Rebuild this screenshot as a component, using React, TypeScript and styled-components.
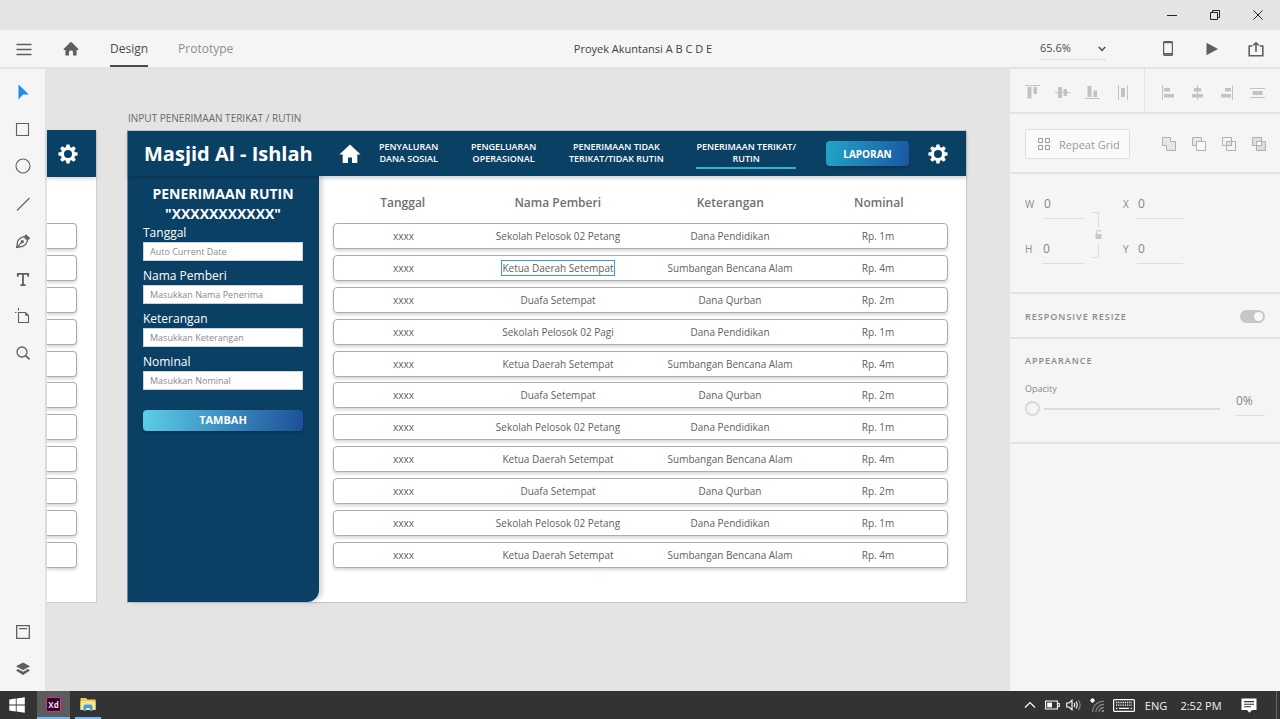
import React from "react";
import styled, { createGlobalStyle } from "styled-components";

const GlobalStyle = createGlobalStyle`
  *, *::before, *::after { box-sizing: border-box; }
  body {
    margin: 0;
    background: #e4e4e4;
    color: #4b4b4b;
    font-family: "Open Sans", "Noto Sans", sans-serif;
    font-size: 12px;
  }
  button, input, select { font: inherit; color: inherit; }
  svg { display: block; flex: none; }
`;

const NAVY = "#0b4065";
const LINE = "#e3e3e3";
const PANEL = "#f5f5f5";

/* ---------- window ---------- */

const Window = styled.div`
  display: flex;
  flex-direction: column;
  min-height: 100vh;
`;

const TitleBar = styled.div`
  display: flex;
  justify-content: flex-end;
  height: 30px;
  padding-right: 1px;
  background: #e4e4e4;
`;

const WindowButton = styled.button`
  display: flex;
  align-items: center;
  justify-content: center;
  width: 43px;
  padding: 0;
  border: 0;
  background: none;
  color: #222;
`;

const IconButton = styled.button<{ $w?: number; $h?: number; $color?: string }>`
  display: flex;
  align-items: center;
  justify-content: center;
  width: ${(p) => p.$w ?? 16}px;
  height: ${(p) => p.$h ?? 30}px;
  padding: 0;
  border: 0;
  background: none;
  color: ${(p) => p.$color ?? "#5f5f5f"};
`;

const AppBar = styled.header`
  display: grid;
  grid-template-columns: 1fr auto 1fr;
  height: 39px;
  padding: 0 10px 0 16px;
  background: ${PANEL};
  border-bottom: 2px solid ${LINE};
`;

const AppBarLeft = styled.div`
  display: flex;
  align-items: center;
  gap: 31px;
`;

const Modes = styled.nav`
  display: flex;
  align-self: stretch;
  gap: 30px;
`;

const Mode = styled.button<{ $on?: boolean }>`
  padding: 2px 0 0;
  border: 0;
  border-bottom: 2px solid ${(p) => (p.$on ? "#4b4b4b" : "transparent")};
  background: none;
  color: ${(p) => (p.$on ? "#4b4b4b" : "#8e8e8e")};
  font-size: 12px;
`;

const DocumentName = styled.h1`
  align-self: center;
  margin: 0;
  font-size: 11px;
  font-weight: 400;
  color: #3e3e3e;
`;

const AppBarRight = styled.div`
  display: flex;
  align-items: center;
  justify-content: flex-end;
  gap: 28px;
  padding-right: 6px;
`;

const ZoomField = styled.label`
  display: flex;
  position: relative;
  width: 66px;
  height: 22px;
  margin-right: 26px;
  border-bottom: 1px solid #dcdcdc;

  svg {
    position: absolute;
    right: 0;
    top: 7px;
    pointer-events: none;
  }
`;

const ZoomSelect = styled.select`
  appearance: none;
  width: 100%;
  padding: 0 0 2px;
  border: 0;
  background: none;
  font-size: 11px;
`;

const Workspace = styled.div`
  display: flex;
  flex: 1;
`;

const Tools = styled.aside`
  display: flex;
  flex-direction: column;
  justify-content: space-between;
  width: 47px;
  padding: 4px 0;
  background: ${PANEL};
  border-right: 2px solid ${LINE};
`;

const ToolGroup = styled.div<{ $h?: number }>`
  display: flex;
  flex-direction: column;
  justify-content: space-between;
  height: ${(p) => (p.$h ? `${p.$h}px` : "auto")};
`;

/* ---------- canvas ---------- */

const Canvas = styled.main`
  display: flex;
  flex: 1;
  align-items: flex-start;
  gap: 30px;
  min-width: 0;
  padding: 41px 43px 40px 0;
`;

const PreviousBoard = styled.section`
  width: 50px;
  height: 473px;
  margin-top: 20px;
  border-right: 1px solid #d0d0d0;
  border-bottom: 1px solid #d0d0d0;
  background: #fff;
`;

const PreviousHead = styled.div`
  display: flex;
  align-items: center;
  height: 47px;
  padding-left: 11px;
  background: ${NAVY};
  box-shadow: 0 2px 4px rgba(0, 0, 0, 0.16);
`;

const PreviousRows = styled.div`
  display: flex;
  flex-direction: column;
  justify-content: space-between;
  height: 345px;
  margin: 46px 19px 0 0;
`;

const PreviousRow = styled.div`
  height: 26px;
  border: 1px solid #adadad;
  border-left: 0;
  border-radius: 0 4px 4px 0;
  box-shadow: 0 2px 3px rgba(0, 0, 0, 0.16);
`;

const BoardColumn = styled.div`
  flex: 1;
  min-width: 0;
`;

const BoardLabel = styled.div`
  height: 20px;
  padding-left: 1px;
  font-size: 10px;
  line-height: 16px;
  color: #6a6a6a;
`;

const Board = styled.section`
  height: 473px;
  border: 1px solid #c4c8cc;
  border-left-color: #6f8a9e;
  background: #fff;
`;

const BoardHead = styled.header`
  position: relative;
  display: flex;
  align-items: center;
  height: 45px;
  padding: 0 18px 0 16px;
  background: ${NAVY};
  box-shadow: 0 2px 4px rgba(0, 0, 0, 0.2);
  color: #fff;
`;

const Brand = styled.h2`
  width: 195px;
  margin: 0;
  font-size: 20px;
  font-weight: 700;
  line-height: 28px;
  white-space: nowrap;
`;

const BoardNav = styled.nav`
  display: flex;
  flex: 1;
  align-items: flex-start;
  justify-content: space-between;
  margin: 0 30px 0 18px;
  padding-top: 2px;
`;

const BoardLink = styled.a<{ $on?: boolean }>`
  padding-bottom: 2px;
  border-bottom: 2px solid ${(p) => (p.$on ? "#29b4cf" : "transparent")};
  color: #fff;
  font-size: 9px;
  font-weight: 600;
  line-height: 12px;
  text-align: center;
  text-decoration: none;
  white-space: nowrap;
`;

const ReportButton = styled.button`
  width: 83px;
  height: 25px;
  margin-right: 19px;
  padding: 0;
  border: 0;
  border-radius: 4px;
  background: linear-gradient(100deg, #22a5c6, #1b57a2);
  box-shadow: 0 2px 3px rgba(0, 0, 0, 0.2);
  color: #fff;
  font-size: 10px;
  font-weight: 700;
`;

const BoardBody = styled.div`
  display: flex;
  height: 426px;
`;

const FormPanel = styled.form`
  width: 191px;
  padding: 8px 16px 0 15px;
  border-bottom-right-radius: 12px;
  background: ${NAVY};
  box-shadow: 3px 0 5px rgba(0, 0, 0, 0.18);
  color: #fff;
`;

const FormTitle = styled.h3`
  margin: 0 -8px;
  font-size: 14px;
  font-weight: 700;
  line-height: 20px;
  text-align: center;
`;

const Field = styled.label`
  display: block;
  height: 43px;
  font-size: 12px;
  line-height: 18px;
`;

const FieldInput = styled.input`
  display: block;
  width: 100%;
  height: 19px;
  padding: 0 6px;
  border: 1px solid #c9d3da;
  border-radius: 0;
  background: #fff;
  color: #555;
  font-size: 9px;

  &::placeholder { color: #8a8a8a; opacity: 1; }
`;

const AddButton = styled.button`
  width: 100%;
  height: 21px;
  margin-top: 14px;
  padding: 0 0 2px;
  border: 0;
  border-radius: 4px;
  background: linear-gradient(100deg, #5ccfe8, #1c4f98);
  box-shadow: 0 2px 3px rgba(0, 0, 0, 0.2);
  color: #fff;
  font-size: 11px;
  font-weight: 700;
  line-height: 18px;
`;

const Records = styled.table`
  display: block;
  flex: 1;
  padding: 17px 18px 0 14px;
`;

const RecordsHead = styled.thead`
  display: block;
  margin-bottom: 10px;
`;

const RecordsBody = styled.tbody`
  display: flex;
  flex-direction: column;
  justify-content: space-between;
  height: 345px;
`;

const Row = styled.tr<{ $card?: boolean }>`
  display: grid;
  grid-template-columns: 139fr 170fr 174fr 122fr;
  align-items: center;
  height: ${(p) => (p.$card ? 26 : 20)}px;
  padding-right: 8px;
  border: ${(p) => (p.$card ? "1px solid #adadad" : "0")};
  border-radius: 4px;
  box-shadow: ${(p) => (p.$card ? "0 2px 3px rgba(0, 0, 0, 0.16)" : "none")};
`;

const HeadCell = styled.th`
  padding: 0;
  color: #707070;
  font-size: 12px;
  font-weight: 600;
  line-height: 18px;
`;

const Cell = styled.td`
  padding: 0;
  color: #606060;
  font-size: 10px;
  line-height: 14px;
  text-align: center;
`;

const Selected = styled.span`
  display: inline-block;
  outline: 1px solid #3d9ad8;
`;

/* ---------- inspector ---------- */

const Inspector = styled.aside`
  width: 270px;
  background: ${PANEL};
  color: #8a8a8a;
`;

const AlignBar = styled.div`
  display: flex;
  height: 45px;
  border-bottom: 2px solid ${LINE};
`;

const AlignGroup = styled.div<{ $first?: boolean }>`
  display: flex;
  align-items: center;
  width: ${(p) => (p.$first ? "135px" : "auto")};
  padding: 3px 0 0 7px;
  border-right: ${(p) => (p.$first ? `1px solid ${LINE}` : "0")};
`;

const GridBar = styled.div`
  display: flex;
  align-items: center;
  height: 60px;
  padding: 2px 0 0 15px;
  border-bottom: 2px solid ${LINE};
`;

const RepeatButton = styled.button`
  display: flex;
  align-items: center;
  gap: 8px;
  width: 105px;
  height: 30px;
  margin-right: 24px;
  padding: 0 0 0 11px;
  border: 1px solid #dfdfdf;
  border-radius: 3px;
  background: #fafafa;
  color: #9a9a9a;
  font-size: 11px;
  white-space: nowrap;
`;

const SizeBlock = styled.div`
  display: flex;
  height: 120px;
  padding: 15px 0 0 15px;
  border-bottom: 2px solid ${LINE};
`;

const SizeColumn = styled.div`
  display: flex;
  flex-direction: column;
  gap: 15px;
`;

const SizeField = styled.label<{ $w: number }>`
  display: flex;
  align-items: center;
  justify-content: space-between;
  width: ${(p) => p.$w}px;
  height: 30px;
  font-size: 10px;
`;

const NumberInput = styled.input<{ $w: number }>`
  width: ${(p) => p.$w}px;
  height: 30px;
  padding: 0 1px;
  border: 0;
  border-bottom: 1px solid #dedede;
  background: none;
  color: #858585;
  font-size: 12px;
`;

const LockLink = styled.div`
  display: flex;
  align-items: center;
  width: 38px;
  height: 92px;
  padding-left: 7px;
`;

const ResizeBar = styled.label`
  display: flex;
  align-items: center;
  justify-content: space-between;
  height: 45px;
  padding: 2px 15px 0;
  border-bottom: 2px solid ${LINE};
  font-size: 9px;
  font-weight: 600;
  letter-spacing: 1px;
`;

const Toggle = styled.input`
  appearance: none;
  display: flex;
  align-items: center;
  justify-content: flex-end;
  width: 25px;
  height: 13px;
  margin: 0;
  padding: 2px;
  border-radius: 7px;
  background: #c6c6c6;

  &::before {
    content: "";
    width: 9px;
    height: 9px;
    border-radius: 5px;
    background: #f8f8f8;
  }
`;

const Appearance = styled.section`
  height: 105px;
  padding: 14px 15px 0;
  border-bottom: 2px solid ${LINE};
`;

const AppearanceTitle = styled.h3`
  margin: 0;
  font-size: 9px;
  font-weight: 600;
  letter-spacing: 1px;
  line-height: 16px;
`;

const OpacityRow = styled.div`
  display: flex;
  align-items: flex-end;
  justify-content: space-between;
  margin-top: 12px;
`;

const OpacityLabel = styled.label`
  width: 195px;
  font-size: 9px;
  line-height: 16px;
`;

const Slider = styled.input`
  appearance: none;
  display: block;
  width: 100%;
  height: 15px;
  margin: 4px 0 0;
  background: linear-gradient(#dcdcdc, #dcdcdc) 19px 50% / 100% 2px no-repeat;

  &::-webkit-slider-thumb {
    appearance: none;
    width: 15px;
    height: 15px;
    border: 2px solid #d8d8d8;
    border-radius: 50%;
    background: ${PANEL};
  }
`;

/* ---------- taskbar ---------- */

const Taskbar = styled.footer`
  display: flex;
  justify-content: space-between;
  height: 28px;
  background: #333;
  color: #f2f2f2;
`;

const TaskGroup = styled.div`
  display: flex;
  align-items: stretch;
`;

const TaskButton = styled.button<{ $w: number; $active?: boolean; $open?: boolean }>`
  display: flex;
  align-items: center;
  justify-content: center;
  width: ${(p) => p.$w}px;
  margin-right: ${(p) => (p.$active ? 5 : 0)}px;
  padding: 0;
  border: 0;
  border-bottom: ${(p) => (p.$open ? "2px solid #76b9ed" : "0")};
  background: ${(p) => (p.$active ? "#5c5c5c" : "none")};
  color: #fff;
`;

const StartButton = styled(TaskButton)`
  padding-right: 3px;
`;

const XdBadge = styled.span`
  display: flex;
  align-items: center;
  justify-content: center;
  width: 15px;
  height: 15px;
  border: 1px solid #d0309c;
  border-radius: 2px;
  background: #2e001e;
  color: #ffd9f2;
  font-size: 8px;
  font-weight: 700;
`;

const Tray = styled.div`
  display: flex;
  align-items: center;
  padding-right: 3px;
`;

const TrayText = styled.span<{ $w: number }>`
  width: ${(p) => p.$w}px;
  font-size: 11px;
  text-align: center;
  white-space: nowrap;
`;

const ShowDesktop = styled.button`
  align-self: stretch;
  width: 1px;
  margin-left: 7px;
  padding: 0;
  border: 0;
  background: #666;
`;

/* ---------- icons ---------- */

const GearIcon = () => (
  <svg width="20" height="20" viewBox="0 0 20 20" fill="none" stroke="#fff">
    <circle cx="10" cy="10" r="5.6" strokeWidth="3.2" />
    {[0, 45, 90, 135, 180, 225, 270, 315].map((a) => (
      <path key={a} d="M7.9 3.6 L8.5 .4 H11.5 L12.1 3.6 Z" fill="#fff" stroke="none" transform={`rotate(${a} 10 10)`} />
    ))}
  </svg>
);

const HouseIcon = ({ size, color }: { size: number; color: string }) => (
  <svg width={size} height={size} viewBox="0 0 22 20" fill={color}>
    <path d="M11 .6 L21.6 10.4 H18.3 V19 H13 V13.4 H9 V19 H3.7 V10.4 H.4 Z" />
  </svg>
);

const HomeIcon = () => (
  <svg width="16" height="16" viewBox="0 0 16 16" fill="currentColor">
    <path d="M7.3 1.3 Q8 .7 8.7 1.3 L15.4 8.1 Q15.8 8.9 15 9 H13.6 V14 Q13.6 14.6 13 14.6 H10 V11 Q10 9.6 8 9.6 Q6 9.6 6 11 V14.6 H3 Q2.4 14.6 2.4 14 V9 H1 Q.2 8.9 .6 8.1 Z" />
  </svg>
);

const Line = ({ d, size = 16, width = 1 }: { d: string; size?: number; width?: number }) => (
  <svg width={size} height={size} viewBox={`0 0 ${size} ${size}`} fill="none" stroke="currentColor" strokeWidth={width}>
    <path d={d} />
  </svg>
);

const Solid = ({ children, size = 15 }: { children: React.ReactNode; size?: number }) => (
  <svg width={size} height={size} viewBox={`0 0 ${size} ${size}`} fill="#c3c3c3">
    {children}
  </svg>
);

const tools: { name: string; icon: React.ReactNode }[] = [
  {
    name: "Select",
    icon: (
      <svg width="16" height="16" viewBox="0 0 16 16">
        <path d="M3.5 .5 L13.8 10.6 H8 L3.5 15.5 Z" fill="#1b8eea" />
      </svg>
    ),
  },
  { name: "Rectangle", icon: <Line d="M1.5 2.5 H13.5 V14.5 H1.5 Z" width={1.1} /> },
  {
    name: "Ellipse",
    icon: (
      <svg width="16" height="16" viewBox="0 0 16 16" fill="none" stroke="currentColor" strokeWidth="1.1">
        <circle cx="8" cy="8" r="7" />
      </svg>
    ),
  },
  { name: "Line", icon: <Line d="M2 14.5 L14.5 2" width={1.1} /> },
  {
    name: "Pen",
    icon: (
      <svg width="16" height="16" viewBox="0 0 16 16" fill="none" stroke="currentColor" strokeWidth="1.2">
        <path d="M1.7 14.4 L2.6 8.4 Q4 5 8.8 3.6 L12.5 7.4 Q11.4 12 7.6 13.4 Z M1.8 14.3 L6.6 9.4" />
        <circle cx="7.3" cy="8.7" r="1" fill="currentColor" />
        <path d="M9 3.3 L11 1.2 L15.2 5.2 L13 7.3 Z" fill="currentColor" stroke="none" />
      </svg>
    ),
  },
  { name: "Text", icon: <Line d="M2.8 5.8 V2.9 H13.2 V5.8 M8 2.9 V14.4 M5.4 14.2 H10.6" width={1.8} /> },
  {
    name: "Artboard",
    icon: (
      <svg width="16" height="16" viewBox="0 0 16 16" fill="none" stroke="currentColor" strokeWidth="1.1">
        <path d="M3.5 4.5 H10.5 L13.5 7.5 V14.5 H3.5 Z M3.5 0 V2.5 M-1 4.5 H1.5" />
        <path d="M10.3 4.3 L13.8 7.8 H10.3 Z" fill="currentColor" stroke="none" />
      </svg>
    ),
  },
  {
    name: "Zoom",
    icon: (
      <svg width="16" height="16" viewBox="0 0 16 16" fill="none" stroke="currentColor" strokeWidth="1.3">
        <circle cx="7" cy="7" r="5" />
        <path d="M10.6 10.6 L14.6 14.4" strokeWidth="1.7" />
      </svg>
    ),
  },
];

const rowAlign = [
  { name: "Align top", icon: <Solid><path d="M0 0 H15 V1 H0 Z M2.5 2 H6.5 V13.5 H2.5 Z M8.5 2 H12 V9 H8.5 Z" /></Solid> },
  { name: "Align middle", icon: <Solid><path d="M0 7 H15 V8 H0 Z M3 2 H7 V13 H3 Z M8.5 4 H12 V11 H8.5 Z" /></Solid> },
  { name: "Align bottom", icon: <Solid><path d="M0 13 H15 V14 H0 Z M2.5 1 H6.5 V12 H2.5 Z M8.5 5.5 H12 V12 H8.5 Z" /></Solid> },
  { name: "Distribute across", icon: <Solid><path d="M3 0 H4 V15 H3 Z M12 0 H13 V15 H12 Z M6 3 H10 V12 H6 Z" /></Solid> },
];

const columnAlign = [
  { name: "Align left", icon: <Solid><path d="M2 0 H3 V15 H2 Z M4 3 H10 V6.5 H4 Z M4 9 H14 V12.5 H4 Z" /></Solid> },
  { name: "Align center", icon: <Solid><path d="M7 0 H8 V15 H7 Z M4 3 H11 V6.5 H4 Z M2 9 H13 V12.5 H2 Z" /></Solid> },
  { name: "Align right", icon: <Solid><path d="M12 0 H13 V15 H12 Z M5 3 H11 V6.5 H5 Z M1 9 H11 V12.5 H1 Z" /></Solid> },
  { name: "Distribute down", icon: <Solid><path d="M0 3 H15 V4 H0 Z M0 12 H15 V13 H0 Z M2.5 6 H12.5 V10 H2.5 Z" /></Solid> },
];

type Shape = "add" | "subtract" | "intersect" | "exclude";

const ShapeIcon = ({ kind }: { kind: Shape }) => (
  <svg width="14" height="14" viewBox="0 0 14 14" fill="none" stroke="#b0b0b0">
    {kind === "add" && <path d="M.5 .5 H8.5 V4.5 H13.5 V13.5 H4.5 V8.5 H.5 Z" fill="#e6e6e6" />}
    {kind === "subtract" && (
      <>
        <path d="M.5 .5 H9.5 V4.5 H4.5 V8.5 H.5 Z" fill="#e6e6e6" />
        <path d="M4.5 4.5 H13.5 V13.5 H4.5 Z" fill="#fafafa" />
      </>
    )}
    {kind === "intersect" && (
      <>
        <path d="M.5 .5 H9.5 V8.5 H.5 Z M4.5 4.5 H13.5 V13.5 H4.5 Z" />
        <path d="M4.5 4.5 H9.5 V8.5 H4.5 Z" fill="#e2e2e2" />
      </>
    )}
    {kind === "exclude" && (
      <>
        <path d="M.5 .5 H9.5 V8.5 H.5 Z M4.5 4.5 H13.5 V13.5 H4.5 Z" fill="#dedede" />
        <path d="M4.5 4.5 H9.5 V8.5 H4.5 Z" fill="#fafafa" />
      </>
    )}
  </svg>
);

const shapes: Shape[] = ["add", "subtract", "intersect", "exclude"];

/* ---------- data ---------- */

const links = [
  ["PENYALURAN", "DANA SOSIAL"],
  ["PENGELUARAN", "OPERASIONAL"],
  ["PENERIMAAN TIDAK", "TERIKAT/TIDAK RUTIN"],
  ["PENERIMAAN TERIKAT/", "RUTIN"],
];

const fields = [
  ["Tanggal", "Auto Current Date"],
  ["Nama Pemberi", "Masukkan Nama Penerima"],
  ["Keterangan", "Masukkan Keterangan"],
  ["Nominal", "Masukkan Nominal"],
];

const petang = ["xxxx", "Sekolah Pelosok 02 Petang", "Dana Pendidikan", "Rp. 1m"];
const pagi = ["xxxx", "Sekolah Pelosok 02 Pagi", "Dana Pendidikan", "Rp. 1m"];
const ketua = ["xxxx", "Ketua Daerah Setempat", "Sumbangan Bencana Alam", "Rp. 4m"];
const duafa = ["xxxx", "Duafa Setempat", "Dana Qurban", "Rp. 2m"];
const records = [petang, ketua, duafa, pagi, ketua, duafa, petang, ketua, duafa, petang, ketua];

export default function App() {
  return (
    <Window>
      <GlobalStyle />
      <TitleBar>
        <WindowButton aria-label="Minimize"><Line size={10} d="M0 5.5 H10" /></WindowButton>
        <WindowButton aria-label="Restore"><Line size={10} d="M.5 2.5 H7.5 V9.5 H.5 Z M2.5 2.5 V.5 H9.5 V7.5 H7.5" /></WindowButton>
        <WindowButton aria-label="Close"><Line size={10} d="M.5 .5 L9.5 9.5 M9.5 .5 L.5 9.5" /></WindowButton>
      </TitleBar>

      <AppBar>
        <AppBarLeft>
          <IconButton aria-label="Menu"><Line d="M.5 3.5 H15.5 M.5 8.5 H15.5 M.5 13.5 H15.5" width={1.6} /></IconButton>
          <IconButton aria-label="Home"><HomeIcon /></IconButton>
          <Modes>
            <Mode $on>Design</Mode>
            <Mode>Prototype</Mode>
          </Modes>
        </AppBarLeft>
        <DocumentName>Proyek Akuntansi A B C D E</DocumentName>
        <AppBarRight>
          <ZoomField>
            <ZoomSelect aria-label="Zoom level" defaultValue="65.6%">
              <option>65.6%</option>
              <option>100%</option>
            </ZoomSelect>
            <Line size={8} d="M.8 2 L4 5.4 L7.2 2" width={1.5} />
          </ZoomField>
          <IconButton aria-label="Device preview">
            <svg width="10" height="15" viewBox="0 0 10 15" fill="none" stroke="currentColor">
              <rect x=".6" y=".6" width="8.8" height="13.8" rx="1" strokeWidth="1.2" />
              <path d="M.5 1.4 H9.5 M.5 12.8 H9.5" strokeWidth="1.8" />
            </svg>
          </IconButton>
          <IconButton aria-label="Play">
            <svg width="12" height="14" viewBox="0 0 12 14" fill="currentColor"><path d="M.5 .8 L12 7 L.5 13.2 Z" /></svg>
          </IconButton>
          <IconButton aria-label="Share">
            <Line d="M4.5 5 H1.2 V14.8 H14.8 V5 H11.5 M8 11 V1.8 M5.4 4.4 L8 1.8 L10.6 4.4" width={1.6} />
          </IconButton>
        </AppBarRight>
      </AppBar>

      <Workspace>
        <Tools>
          <ToolGroup $h={299}>
            {tools.map((t) => (
              <IconButton key={t.name} aria-label={t.name} $w={45} $h={37}>{t.icon}</IconButton>
            ))}
          </ToolGroup>
          <ToolGroup>
            <IconButton aria-label="Assets" $w={45} $h={37}>
              <Line d="M1.7 1.7 H14.3 V14.3 H1.7 Z M4 4.6 H12" width={1.3} />
            </IconButton>
            <IconButton aria-label="Layers" $w={45} $h={37}>
              <svg width="16" height="16" viewBox="0 0 16 16" fill="currentColor">
                <path d="M8 1.5 L15 5.3 L8 9.2 L1 5.3 Z" />
                <path d="M3 8 L8 10.8 L13 8 L15 9.4 L8 14 L1 9.4 Z" />
              </svg>
            </IconButton>
          </ToolGroup>
        </Tools>

        <Canvas>
          <PreviousBoard>
            <PreviousHead><GearIcon /></PreviousHead>
            <PreviousRows>
              {records.map((_, i) => <PreviousRow key={i} />)}
            </PreviousRows>
          </PreviousBoard>

          <BoardColumn>
            <BoardLabel>INPUT PENERIMAAN TERIKAT / RUTIN</BoardLabel>
            <Board>
              <BoardHead>
                <Brand>Masjid Al - Ishlah</Brand>
                <HouseIcon size={22} color="#fff" />
                <BoardNav>
                  {links.map(([top, bottom], i) => (
                    <BoardLink key={top} href="#" $on={i === 3}>
                      {top}
                      <br />
                      {bottom}
                    </BoardLink>
                  ))}
                </BoardNav>
                <ReportButton>LAPORAN</ReportButton>
                <GearIcon />
              </BoardHead>
              <BoardBody>
                <FormPanel>
                  <FormTitle>
                    PENERIMAAN RUTIN
                    <br />
                    "XXXXXXXXXXX"
                  </FormTitle>
                  {fields.map(([label, hint]) => (
                    <Field key={label}>
                      {label}
                      <FieldInput placeholder={hint} />
                    </Field>
                  ))}
                  <AddButton type="button">TAMBAH</AddButton>
                </FormPanel>
                <Records>
                  <RecordsHead>
                    <Row>
                      <HeadCell>Tanggal</HeadCell>
                      <HeadCell>Nama Pemberi</HeadCell>
                      <HeadCell>Keterangan</HeadCell>
                      <HeadCell>Nominal</HeadCell>
                    </Row>
                  </RecordsHead>
                  <RecordsBody>
                    {records.map((cells, r) => (
                      <Row key={r} $card>
                        {cells.map((text, c) => (
                          <Cell key={c}>{r === 1 && c === 1 ? <Selected>{text}</Selected> : text}</Cell>
                        ))}
                      </Row>
                    ))}
                  </RecordsBody>
                </Records>
              </BoardBody>
            </Board>
          </BoardColumn>
        </Canvas>

        <Inspector>
          <AlignBar>
            <AlignGroup $first>
              {rowAlign.map((a) => <IconButton key={a.name} aria-label={a.name} $w={30}>{a.icon}</IconButton>)}
            </AlignGroup>
            <AlignGroup>
              {columnAlign.map((a) => <IconButton key={a.name} aria-label={a.name} $w={30}>{a.icon}</IconButton>)}
            </AlignGroup>
          </AlignBar>
          <GridBar>
            <RepeatButton>
              <Line size={14} d="M1.5 1.5 H5.5 V5.5 H1.5 Z M8.5 1.5 H12.5 V5.5 H8.5 Z M1.5 8.5 H5.5 V12.5 H1.5 Z M8.5 8.5 H12.5 V12.5 H8.5 Z" />
              Repeat Grid
            </RepeatButton>
            {shapes.map((s) => (
              <IconButton key={s} aria-label={s} $w={30}><ShapeIcon kind={s} /></IconButton>
            ))}
          </GridBar>
          <SizeBlock>
            <SizeColumn>
              <SizeField $w={60}>W<NumberInput $w={42} defaultValue="0" /></SizeField>
              <SizeField $w={60}>H<NumberInput $w={43} defaultValue="0" /></SizeField>
            </SizeColumn>
            <LockLink>
              <svg width="10" height="48" viewBox="0 0 10 48" fill="none" stroke="#dcdcdc">
                <path d="M0 1.5 H6.5 V16 M6.5 32 V46.5 H0" />
                <path d="M4.7 23 V20.8 A2 2 0 0 1 8.6 20.8" stroke="#c8c8c8" strokeWidth="1.2" />
                <path d="M3.5 23 H9.5 V28 H3.5 Z" fill="#c8c8c8" stroke="none" />
              </svg>
            </LockLink>
            <SizeColumn>
              <SizeField $w={60}>X<NumberInput $w={46} defaultValue="0" /></SizeField>
              <SizeField $w={60}>Y<NumberInput $w={46} defaultValue="0" /></SizeField>
            </SizeColumn>
          </SizeBlock>
          <ResizeBar>
            RESPONSIVE RESIZE
            <Toggle type="checkbox" defaultChecked />
          </ResizeBar>
          <Appearance>
            <AppearanceTitle>APPEARANCE</AppearanceTitle>
            <OpacityRow>
              <OpacityLabel>
                Opacity
                <Slider type="range" min="0" max="100" defaultValue="0" />
              </OpacityLabel>
              <NumberInput $w={30} aria-label="Opacity percent" defaultValue="0%" />
            </OpacityRow>
          </Appearance>
        </Inspector>
      </Workspace>

      <Taskbar>
        <TaskGroup>
          <StartButton $w={37} aria-label="Start">
            <svg width="16" height="16" viewBox="0 0 16 16" fill="#fff">
              <path d="M.3 2.5 L6.8 1.5 V7.6 H.3 Z M7.6 1.4 L15.8 .2 V7.6 H7.6 Z M.3 8.4 H6.8 V14.5 L.3 13.5 Z M7.6 8.4 H15.8 V15.8 L7.6 14.6 Z" />
            </svg>
          </StartButton>
          <TaskButton $w={33} $active $open><XdBadge>Xd</XdBadge></TaskButton>
          <TaskButton $w={26} $open aria-label="File Explorer">
            <svg width="16" height="15" viewBox="0 0 16 15">
              <path d="M.5 1 H6 L7.5 2.6 H15.5 V13 H.5 Z" fill="#f3c84f" />
              <path d="M.5 4.2 H15.5 V13 H.5 Z" fill="#fbe48f" />
              <path d="M3.5 14 V9.5 A2 2 0 0 1 5.5 7.5 H10.5 A2 2 0 0 1 12.5 9.5 V14 H10 V11 H6 V14 Z" fill="#3aa3dc" />
            </svg>
          </TaskButton>
        </TaskGroup>
        <Tray>
          <IconButton aria-label="Hidden icons" $w={22} $h={28} $color="#fff"><Line size={12} d="M1 8.5 L6 3.5 L11 8.5" width={1.2} /></IconButton>
          <IconButton aria-label="Battery" $w={22} $h={28} $color="#fff">
            <svg width="15" height="10" viewBox="0 0 15 10" fill="none" stroke="currentColor">
              <path d="M.6 1 H12.4 V9 H.6 Z M12.5 3.5 H14.3 V6.5 H12.5" strokeWidth="1.1" />
              <path d="M2.2 2.6 H7 V7.4 H2.2 Z" fill="currentColor" stroke="none" />
            </svg>
          </IconButton>
          <IconButton aria-label="Volume" $w={22} $h={28} $color="#fff">
            <svg width="16" height="12" viewBox="0 0 16 12" fill="none" stroke="currentColor" strokeWidth="1.1">
              <path d="M.7 4 H3 L6 1.2 V10.8 L3 8 H.7 Z M8 4.2 Q9.4 6 8 7.8 M10 2.6 Q12.4 6 10 9.4" />
              <path d="M12.3 1 Q16 6 12.3 11" stroke="#8a8a8a" />
            </svg>
          </IconButton>
          <IconButton aria-label="Network" $w={24} $h={28} $color="#fff">
            <svg width="15" height="15" viewBox="0 0 15 15" fill="none" stroke="#8c8c8c" strokeWidth="1.1">
              <path d="M2.6 14 A11 11 0 0 1 14 3.2 M5.8 14 A8 8 0 0 1 14 6.4 M9 14 A5 5 0 0 1 14 9.6" />
              <circle cx="12.8" cy="13" r="1.3" fill="#8c8c8c" stroke="none" />
              <path d="M2.5 .3 V4.7 M.3 2.5 H4.7 M.9 .9 L4.1 4.1 M4.1 .9 L.9 4.1" stroke="#fff" strokeWidth="1.1" />
            </svg>
          </IconButton>
          <IconButton aria-label="Keyboard" $w={30} $h={28} $color="#fff">
            <svg width="22" height="13" viewBox="0 0 22 13" fill="none" stroke="currentColor">
              <rect x=".6" y=".6" width="20.8" height="11.8" rx="1" strokeWidth="1.2" />
              <path d="M3 3.5 H19 M3 6.2 H19" strokeWidth="1.3" strokeDasharray="1.2 1" />
              <path d="M3 9.3 H4.4 M6 9.3 H16 M17.6 9.3 H19" strokeWidth="1.2" />
            </svg>
          </IconButton>
          <TrayText $w={34}>ENG</TrayText>
          <TrayText $w={56}>2:52 PM</TrayText>
          <IconButton aria-label="Notifications" $w={40} $h={28} $color="#fff">
            <svg width="16" height="15" viewBox="0 0 16 15">
              <path d="M.5 .5 H15.5 V12 H11 L8.5 14.8 L6 12 H.5 Z" fill="#fff" />
              <path d="M3 3.6 H13 M3 6.2 H13 M3 8.8 H10" stroke="#333" strokeWidth="1.1" />
            </svg>
          </IconButton>
          <ShowDesktop aria-label="Show desktop" />
        </Tray>
      </Taskbar>
    </Window>
  );
}
